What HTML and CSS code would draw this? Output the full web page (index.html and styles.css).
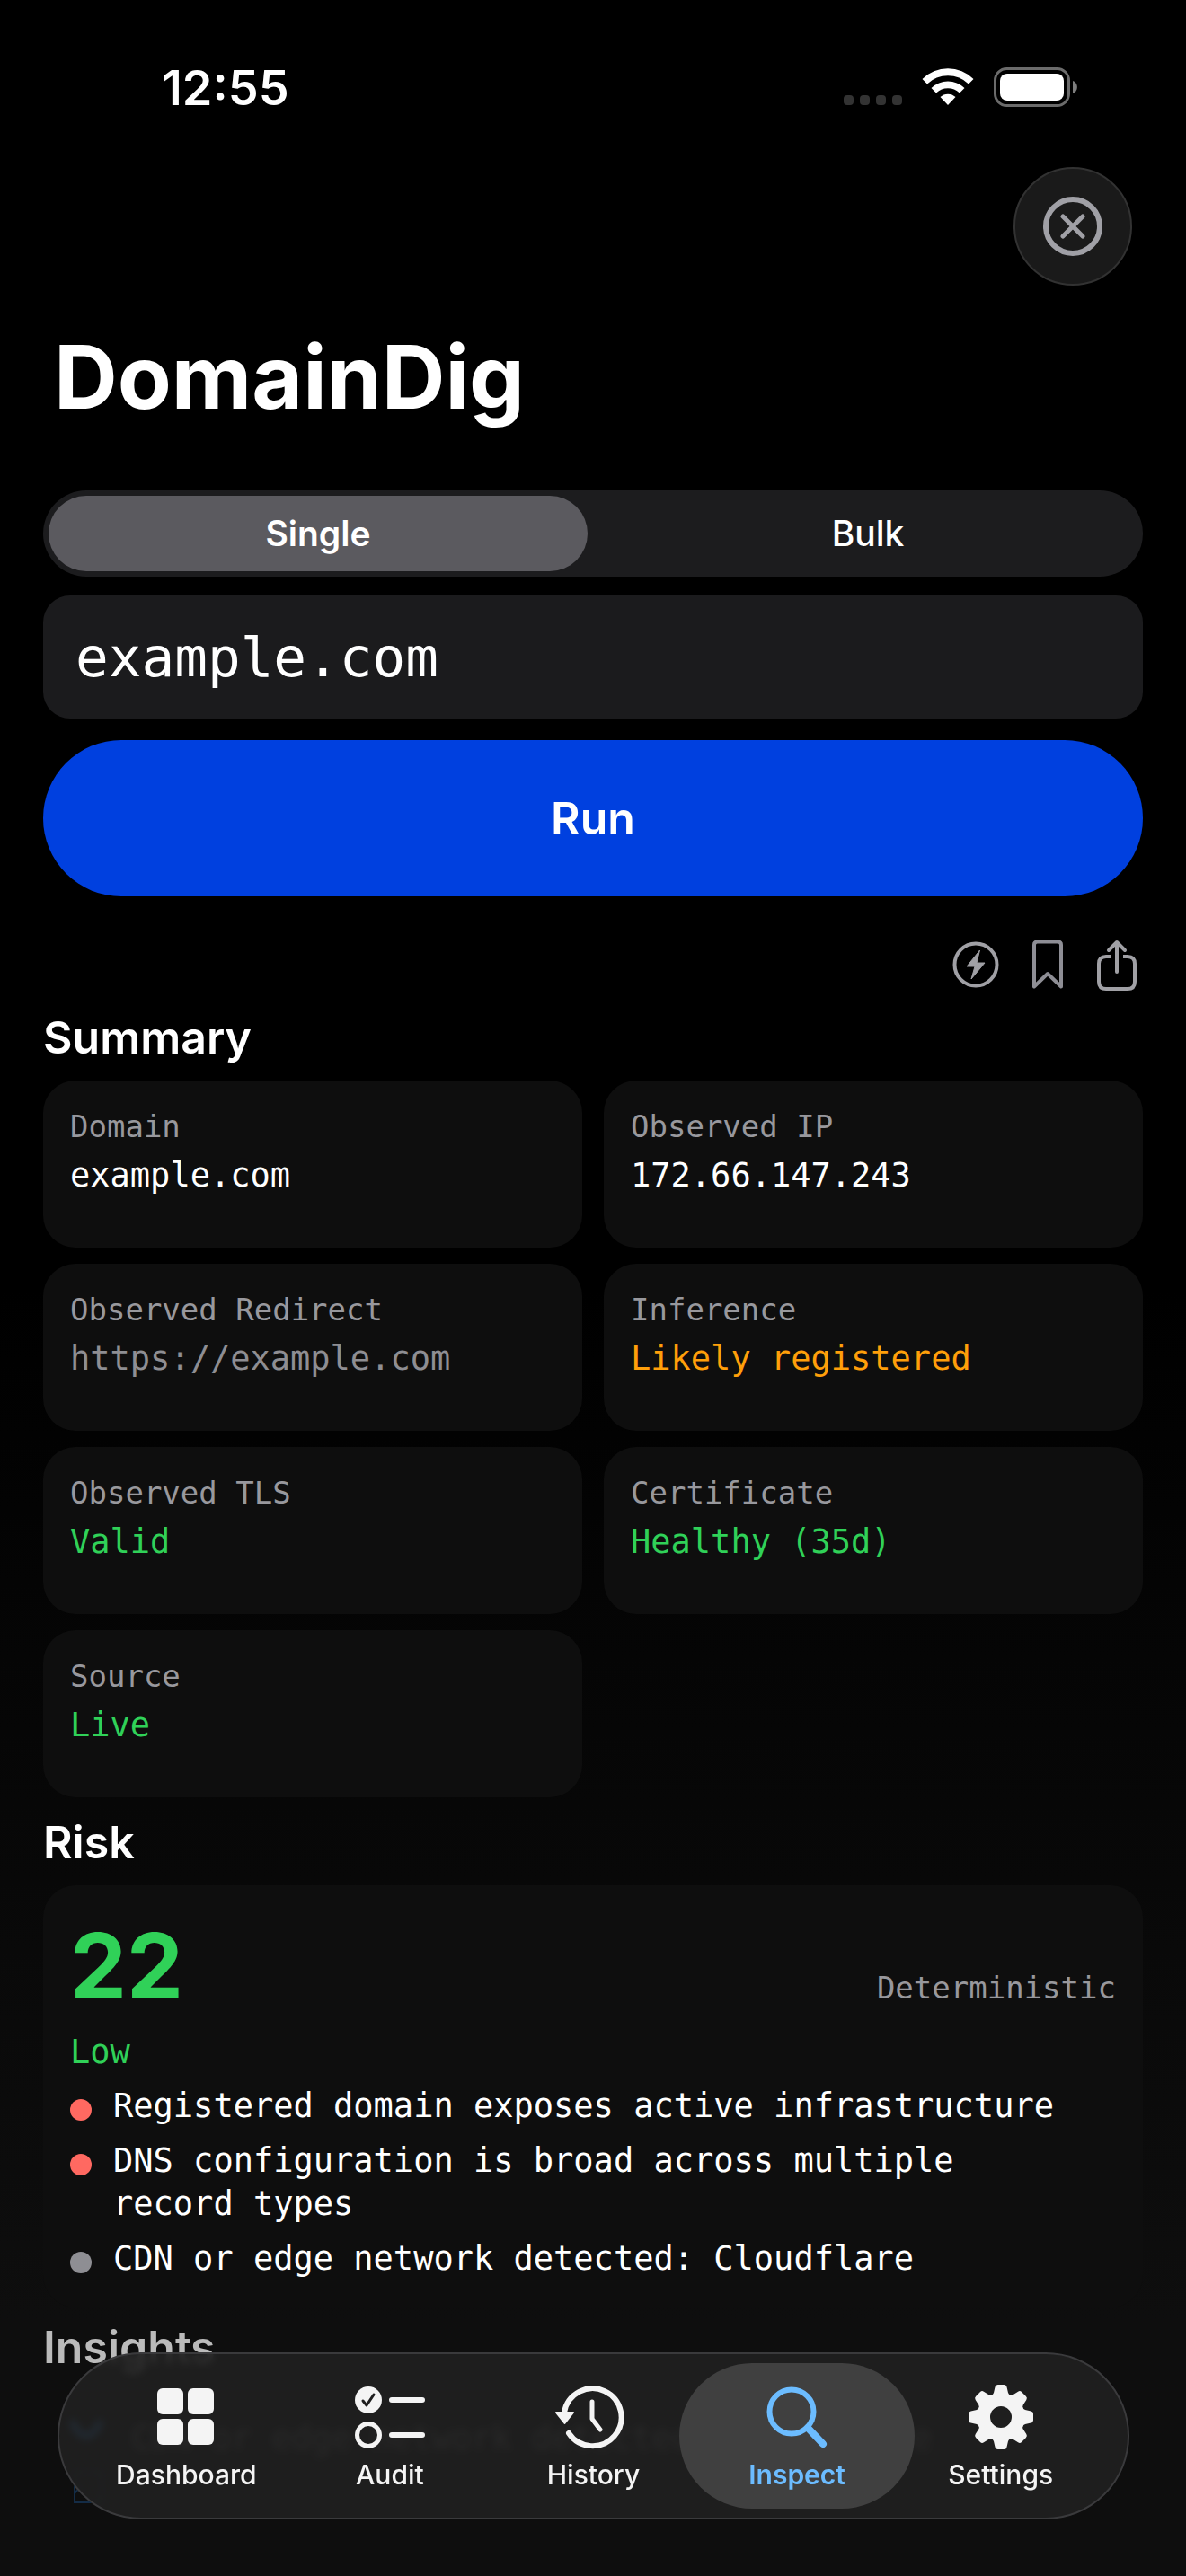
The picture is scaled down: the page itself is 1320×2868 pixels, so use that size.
FILE: index.html
```html
<!DOCTYPE html>
<html lang="en">
<head>
  <meta charset="UTF-8">
  <meta name="viewport" content="width=device-width, initial-scale=1.0">
  <title>DomainDig</title>
  <link rel="stylesheet" href="styles.css">
</head>

<body>
  <div class="status-bar">
    <time class="clock">12:55</time>
    <div class="status-icons">
      <span class="signal"><i></i><i></i><i></i><i></i></span>
      <svg class="wifi" width="58" height="42" viewBox="0 0 58 42" fill="#fff">
        <path d="M0.500 13 A40.500 40.500 0 0 1 57.500 13 L52 18.500 A33 33 0 0 0 6 18.500 Z" />
        <path d="M10.500 23 A26.500 26.500 0 0 1 47.500 23 L42 28.500 A19 19 0 0 0 16 28.500 Z" />
        <path d="M20.500 33 A12.500 12.500 0 0 1 37.500 33 L29 42 Z" />
      </svg>
      <svg class="battery" width="94" height="44" viewBox="0 0 94 44">
        <rect x="1.500" y="1.500" width="82" height="41" rx="13" fill="none" stroke="#6b6b6b" stroke-width="3" />
        <rect x="7" y="7" width="71" height="30" rx="8" fill="#fff" />
        <path d="M88 15 C94.500 17 94.500 27 88 29 Z" fill="#7d7d7d" />
      </svg>
    </div>
  </div>

  <header class="toolbar">
    <button class="close" type="button" aria-label="Clear">
      <svg width="66" height="66" viewBox="0 0 66 66" fill="none" stroke="#a0a0a6" stroke-linecap="round">
        <circle cx="33" cy="33" r="30" stroke-width="6" />
        <path d="M22 22 L44 44 M44 22 L22 44" stroke-width="5" />
      </svg>
    </button>
  </header>

  <main>
    <h1>DomainDig</h1>

    <form id="lookup">
      <div class="segmented">
        <label>
          <input type="radio" name="mode" value="single" checked>
          <span>Single</span>
        </label>
        <label>
          <input type="radio" name="mode" value="bulk">
          <span>Bulk</span>
        </label>
      </div>
      <input class="domain" type="text" name="domain" value="example.com" aria-label="Domain">
      <button class="run" type="submit">Run</button>
    </form>

    <div class="actions">
      <button type="button" aria-label="Quick run">
        <svg width="52" height="58" viewBox="0 0 52 58">
          <circle cx="26" cy="29" r="23.500" fill="none" stroke="#a0a0a5" stroke-width="4" />
          <path d="M30.500 13 L16 31 H25 L21 45 L36 27 H27 Z" fill="#a0a0a5" stroke="#a0a0a5" stroke-width="1" stroke-linejoin="round" />
        </svg>
      </button>
      <button type="button" aria-label="Bookmark">
        <svg width="34" height="58" viewBox="0 0 34 58" fill="none" stroke="#8e8e95" stroke-width="4" stroke-linejoin="round">
          <path d="M2 53.500 V7 Q2 3.500 5.500 3.500 H28.500 Q32 3.500 32 7 V53.500 L17 39 Z" />
        </svg>
      </button>
      <button type="button" aria-label="Share">
        <svg width="46" height="58" viewBox="0 0 46 58" fill="none" stroke="#a0a0a5" stroke-width="4" stroke-linecap="round" stroke-linejoin="round">
          <path d="M16 20 H11 Q3 20 3 28 V48 Q3 56 11 56 H35 Q43 56 43 48 V28 Q43 20 35 20 H30" stroke-linecap="butt" />
          <path d="M23 37 V4 M14 13 L23 4 L32 13" />
        </svg>
      </button>
    </div>

    <section>
      <h2>Summary</h2>
      <dl class="summary">
        <div class="card">
          <dt>Domain</dt>
          <dd>example.com</dd>
        </div>
        <div class="card">
          <dt>Observed IP</dt>
          <dd>172.66.147.243</dd>
        </div>
        <div class="card">
          <dt>Observed Redirect</dt>
          <dd class="muted">https://example.com</dd>
        </div>
        <div class="card">
          <dt>Inference</dt>
          <dd class="warn">Likely registered</dd>
        </div>
        <div class="card">
          <dt>Observed TLS</dt>
          <dd class="good">Valid</dd>
        </div>
        <div class="card">
          <dt>Certificate</dt>
          <dd class="good">Healthy (35d)</dd>
        </div>
        <div class="card">
          <dt>Source</dt>
          <dd class="good">Live</dd>
        </div>
      </dl>
    </section>

    <section>
      <h2>Risk</h2>
      <div class="card risk">
        <div class="score">
          <strong>22</strong>
          <span>Deterministic</span>
        </div>
        <p class="good">Low</p>
        <ul>
          <li>Registered domain exposes active infrastructure</li>
          <li>DNS configuration is broad across multiple record types</li>
          <li class="neutral">CDN or edge network detected: Cloudflare</li>
        </ul>
      </div>
    </section>

    <section class="insights">
      <h2>Insights</h2>
      <div class="insight">
        <svg width="36" height="36" viewBox="0 0 36 36" fill="none" stroke="#2f7fd0" stroke-width="8">
          <path d="M1 4 Q18 38 35 4" />
        </svg>
        <p>CDN or edge network detected: Cloudflare</p>
      </div>
      <div class="insight">
        <svg width="36" height="36" viewBox="0 0 36 36" fill="none" stroke="#142c46" stroke-width="2">
          <path d="M5 1 H35 V35 H5 Z M5 25 L12 17" />
        </svg>
      </div>
    </section>
  </main>

  <nav class="tabs">
    <a href="#dashboard">
      <svg width="64" height="72" viewBox="0 0 64 72" fill="currentColor">
        <rect x="0" y="4" width="29" height="29" rx="6" />
        <rect x="34" y="4" width="29" height="29" rx="6" />
        <rect x="0" y="38" width="29" height="29" rx="6" />
        <rect x="34" y="38" width="29" height="29" rx="6" />
      </svg>
      <span>Dashboard</span>
    </a>
    <a href="#audit">
      <svg width="78" height="72" viewBox="0 0 78 72" fill="none" stroke="currentColor" stroke-width="6" stroke-linecap="round">
        <circle cx="15" cy="17" r="15" fill="currentColor" stroke="none" />
        <path d="M9 18 L13 23 L21 11" stroke="#1f1f1f" stroke-width="3" stroke-linejoin="round" />
        <circle cx="15" cy="56" r="12.500" stroke-width="5" />
        <path d="M41 17 H75 M41 56 H75" />
      </svg>
      <span>Audit</span>
    </a>
    <a href="#history">
      <svg width="84" height="72" viewBox="0 0 84 72" fill="none" stroke="currentColor" stroke-width="6" stroke-linecap="round">
        <path d="M10 31 A32 32 0 1 1 15 54" />
        <path d="M41 19 V38 L50 50" stroke-width="5" stroke-linejoin="round" />
        <path d="M1 31 H20 L10.500 43 Z" fill="currentColor" stroke-width="2" stroke-linejoin="round" />
      </svg>
      <span>History</span>
    </a>
    <a class="active" href="#inspect">
      <svg width="68" height="72" viewBox="0 0 68 72" fill="none" stroke="currentColor" stroke-width="6">
        <circle cx="28" cy="30" r="24.500" />
        <path d="M46 48 L63 66" stroke-width="8" stroke-linecap="round" />
      </svg>
      <span>Inspect</span>
    </a>
    <a href="#settings">
      <svg width="72" height="72" viewBox="0 0 72 72" fill="currentColor">
        <defs>
          <path id="tooth" d="M29.500 2.500 Q30 0 32.500 0 H39.500 Q42 0 42.500 2.500 L44 9 Q44.500 11 47 12 L36 24 L25 12 Q27.500 11 28 9 Z" />
        </defs>
        <circle cx="36" cy="36" r="19" fill="none" stroke="currentColor" stroke-width="14" />
        <use href="#tooth" />
        <use href="#tooth" transform="rotate(45 36 36)" />
        <use href="#tooth" transform="rotate(90 36 36)" />
        <use href="#tooth" transform="rotate(135 36 36)" />
        <use href="#tooth" transform="rotate(180 36 36)" />
        <use href="#tooth" transform="rotate(225 36 36)" />
        <use href="#tooth" transform="rotate(270 36 36)" />
        <use href="#tooth" transform="rotate(315 36 36)" />
      </svg>
      <span>Settings</span>
    </a>
  </nav>
</body>
</html>
```
FILE: styles.css
```css
* {
  box-sizing: border-box;
}
body {
  margin: 0;
  min-height: 100vh;
  background: linear-gradient(#000 50%, #0e0e0e 90%);
  color: #fff;
  font-family: Inter, "Liberation Sans", sans-serif;
}
h1, h2, p, ul, dl, dd {
  margin: 0;
  padding: 0;
}
button {
  border: 0;
  padding: 0;
  background: none;
  color: inherit;
  font-family: inherit;
}
svg {
  display: block;
}

/* status bar */
.status-bar {
  display: flex;
  justify-content: space-between;
  padding: 66px 120px 0 180px;
}
.clock {
  font-size: 54px;
  line-height: 64px;
  font-weight: 600;
}
.status-icons {
  display: flex;
  align-items: flex-start;
  gap: 22px;
  padding-top: 9px;
}
.signal {
  display: flex;
  gap: 7px;
  padding-top: 31px;
}
.signal i {
  width: 11px;
  height: 11px;
  border-radius: 4px;
  background-color: #333;
}

.toolbar {
  display: flex;
  justify-content: flex-end;
  padding: 56px 60px 0;
}
.close {
  display: flex;
  justify-content: center;
  align-items: center;
  width: 132px;
  height: 132px;
  border: 2px solid #323232;
  border-radius: 50%;
  background-color: #1a1a1a;
}

main {
  padding: 0 48px;
}
h1 {
  padding: 42px 12px 66px;
  font-size: 98px;
  line-height: 120px;
  font-weight: 700;
}
h2 {
  font-size: 50px;
  line-height: 60px;
  font-weight: 600;
}

/* lookup form */
.segmented {
  display: flex;
  gap: 12px;
  padding: 6px;
  border-radius: 48px;
  background-color: #1c1c1e;
}
.segmented label {
  flex: 1;
  position: relative;
}
.segmented input {
  position: absolute;
  opacity: 0;
}
.segmented span {
  display: block;
  border-radius: 42px;
  font-size: 39px;
  line-height: 84px;
  font-weight: 500;
  text-align: center;
}
.segmented input:checked + span {
  background-color: #5b5a5f;
  font-weight: 600;
}
.domain {
  display: block;
  width: 100%;
  height: 137px;
  margin: 21px 0 24px;
  padding: 0 36px;
  border: 0;
  border-radius: 30px;
  background-color: #1b1b1d;
  color: #fff;
  font-family: "DejaVu Sans Mono", monospace;
  font-size: 61px;
}
.run {
  display: block;
  width: 100%;
  height: 174px;
  border-radius: 87px;
  background-color: #0040df;
  font-size: 50px;
  font-weight: 600;
}

.actions {
  display: flex;
  justify-content: flex-end;
  gap: 37px;
  padding: 47px 6px 22px;
}

/* cards */
.card {
  padding: 30px;
  border-radius: 36px;
  background-color: #0e0e0e;
  font-family: "DejaVu Sans Mono", monospace;
  font-size: 37px;
  line-height: 48px;
}
.summary {
  display: grid;
  grid-template-columns: 1fr 1fr;
  gap: 18px 24px;
  margin: 18px 0 20px;
}
.summary .card {
  height: 186px;
}
dt, .score span {
  color: #98989d;
  font-size: 34px;
}
dt {
  line-height: 42px;
}
dd {
  margin-top: 10px;
}
.muted {
  color: #8e8e93;
}
.warn {
  color: #ff9f0a;
}
.good {
  color: #30d158;
}

.risk {
  margin: 18px 0 14px;
}
.score {
  display: flex;
  justify-content: space-between;
  align-items: baseline;
}
.score strong {
  color: #30d158;
  font-family: Inter, sans-serif;
  font-size: 100px;
  line-height: 120px;
  font-weight: 700;
}
.risk p {
  margin: 12px 0;
}
.risk ul {
  display: grid;
  gap: 13px;
  padding-right: 48px;
  list-style: none;
}
.risk li {
  display: flex;
  gap: 24px;
}
.risk li::before {
  content: "";
  flex: none;
  width: 24px;
  height: 24px;
  margin-top: 16px;
  border-radius: 50%;
  background-color: #ff6961;
}
.risk .neutral::before {
  background-color: #8e8e93;
}

.insights h2 {
  color: #bbb;
}
.insight {
  display: flex;
  gap: 32px;
  padding: 48px 30px 0;
  color: #777;
  font-family: "DejaVu Sans Mono", monospace;
  font-size: 37px;
  line-height: 48px;
}
.insight + .insight {
  padding-top: 12px;
}

/* tab bar */
.tabs {
  position: fixed;
  left: 64px;
  right: 63px;
  bottom: 63px;
  display: grid;
  grid-template-columns: repeat(5, 1fr);
  padding: 10px 28px;
  border: 2px solid #3a3a3c;
  border-radius: 93px;
  background-color: rgba(32, 32, 32, 0.9);
  backdrop-filter: blur(4px);
}
.tabs a {
  display: flex;
  flex-direction: column;
  align-items: center;
  height: 162px;
  margin: 0 -18px;
  padding-top: 24px;
  border-radius: 81px;
  color: #f4f4f4;
  font-size: 30px;
  line-height: 36px;
  font-weight: 500;
  text-decoration: none;
}
.tabs span {
  margin-top: 10px;
}
.tabs .active {
  background-color: #404040;
  color: #6cbcff;
  font-weight: 600;
}
```
